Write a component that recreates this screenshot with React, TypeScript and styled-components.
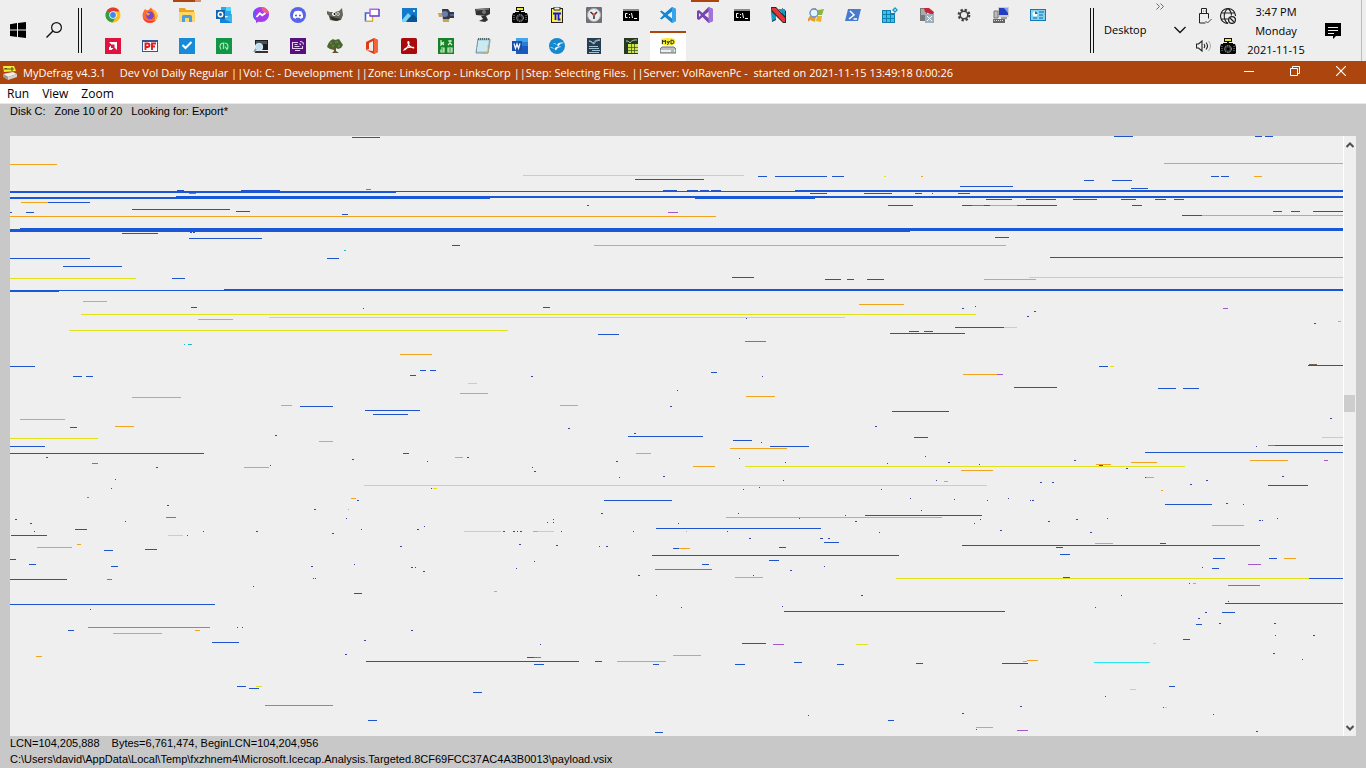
import React from "react";
import styled, { createGlobalStyle } from "styled-components";

const ACCENT = "#ad460e";
const UI_FONT = '"Open Sans", "Noto Sans", sans-serif';
const PLAIN_FONT = '"Liberation Sans", Arial, sans-serif';

const GlobalStyle = createGlobalStyle`
  * { box-sizing: border-box; }
  body { margin: 0; background: #c8c8c8; color: #000; font-family: ${UI_FONT}; font-size: 11px; }
  button { border: 0; padding: 0; background: none; font: inherit; color: inherit; cursor: pointer; }
  svg { display: block; }
`;

const Screen = styled.div`
  display: flex;
  flex-direction: column;
  min-height: 100vh;
`;

/* ---------- taskbar ---------- */

const Taskbar = styled.header`
  display: flex;
  height: 61px;
  background: #eee;
  overflow: hidden;
`;

const StartArea = styled.div`
  display: flex;
  align-items: center;
  flex: none;
  width: 95px;
  padding: 0 0 1px 10px;
  gap: 16px;
`;

const StartButton = styled.button`
  width: 20px;
`;

const Separator = styled.div`
  flex: none;
  width: 4px;
  height: 45px;
  border: solid #111;
  border-width: 0 1px;
`;

const AppRows = styled.nav`
  flex: 1;
  min-width: 0;
`;

const AppRow = styled.div`
  display: flex;
  height: 31px;
`;

const AppButton = styled.button<{ $active?: boolean; $running?: "one" | "many" }>`
  position: relative;
  flex: none;
  width: 36px;
  margin-right: 1px;
  padding: 7px 10px 8px;
  background: ${(p) => (p.$active ? "#fff" : "none")};
  &::before {
    content: "";
    display: ${(p) => (p.$active || p.$running ? "block" : "none")};
    position: absolute;
    top: 0;
    left: ${(p) => (p.$active ? 0 : 4)}px;
    right: ${(p) => (p.$active ? 0 : 4)}px;
    height: 2px;
    background: ${(p) =>
      p.$running === "many" ? `linear-gradient(90deg, ${ACCENT} 22px, #cf9474 22px)` : ACCENT};
  }
`;

const Tray = styled.div`
  display: flex;
  align-items: center;
  flex: none;
  width: 276px;
`;

const DesktopMenu = styled.button`
  position: relative;
  display: flex;
  align-items: center;
  justify-content: space-between;
  width: 102px;
  height: 61px;
  padding: 0 10px 2px;
`;

const Overflow = styled.span`
  position: absolute;
  top: 3px;
  right: 32px;
`;

const TrayGrid = styled.div`
  display: grid;
  grid-template-columns: 16px 16px;
  grid-auto-rows: 16px;
  gap: 14px 8px;
`;

const Clock = styled.time`
  width: 80px;
  text-align: center;
  line-height: 19px;
  white-space: nowrap;
`;

const Notifications = styled.button`
  width: 46px;
  height: 61px;
  padding: 0 9px;
  border-right: 1px solid #bbb;
`;

/* ---------- window ---------- */

const TitleBar = styled.div`
  display: flex;
  align-items: center;
  height: 23px;
  padding-left: 2px;
  background: ${ACCENT};
  color: #fff;
  white-space: nowrap;
`;

const Title = styled.h1`
  display: flex;
  flex: 1;
  gap: 14px;
  min-width: 0;
  margin: 0 0 0 5px;
  overflow: hidden;
  font-size: 11px;
  font-weight: 400;
  line-height: 23px;
`;

const WindowButton = styled.button`
  display: flex;
  align-items: center;
  justify-content: center;
  width: 46px;
  height: 23px;
  padding-bottom: 3px;
  &:last-child { margin-right: 2px; }
`;

const MenuBar = styled.nav`
  display: flex;
  gap: 13px;
  height: 20px;
  padding: 0 7px;
  background: #fff;
  border-bottom: 1px solid #e8e8e8;
  font-size: 12px;
  line-height: 19px;
`;

const InfoLine = styled.div`
  display: flex;
  gap: 9px;
  height: 32px;
  padding-left: 10px;
  font: 11px/15px ${PLAIN_FONT};
  white-space: nowrap;
`;

const MapFrame = styled.main`
  display: flex;
  flex: 1 1 600px;
  margin: 0 10px;
  background: #efefef;
`;

const MapSvg = styled.svg`
  flex: 1;
  min-width: 0;
  height: auto;
`;

const ScrollBar = styled.div`
  display: flex;
  flex-direction: column;
  width: 13px;
  border-left: 1px solid #fff;
`;

const ScrollButton = styled.button`
  display: flex;
  justify-content: center;
  align-items: center;
  height: 17px;
`;

const ScrollTrack = styled.div`
  display: flex;
  flex-direction: column;
  flex: 1;
`;

const ScrollGap = styled.div<{ $share: number }>`
  flex: ${(p) => p.$share};
`;

const ScrollThumb = styled.div`
  height: 17px;
  margin-right: 1px;
  background: #cdcdcd;
`;

const StatusBar = styled.footer`
  height: 32px;
  padding-left: 10px;
  font: 11px/16px ${PLAIN_FONT};
  white-space: nowrap;
`;

const StatusLine = styled.div`
  display: flex;
  height: 16px;
  gap: 12px;
  line-height: 14px;
`;

/* ---------- disk map data: "row:start-end,start-end ..." in cluster-map units ---------- */

const runs: { color: string; rows: string }[] = [
  {
    color: "#e2e21c",
    rows: `175:523-744 176:884-886 278:10-136 277:1029-1343 314:81-976 317:269-845 330:69-508
    327:1004-1017 438:10-98 485:364-987 488:433-437 535:168-183 383:468-477 466:745-1185
    531:464-501,538-554 366:1110-1114 437:1322-1343 686:256-262 578:896-1309
    644:856-868 643:1153-1156 689:1130-1136 707:1165-1167`,
  },
  {
    color: "#f2a41c",
    rows: `164:10-57 202:21-48 216:10-716 319:198-233 354:400-432 304:859-904 163:1164-1343
    176:921-923,1254-1262 205:990-1017 215:1202-1343 279:984-1036 321:1338-1341
    397:132-181 419:20-65 426:115-134 405:281-292,560-578 457:455-463 467:244-269 498:351-356
    509:348-349 547:37-72 544:77-81 393:460-488 396:746-775 448:730-787 453:636-651 466:693-715
    531:533-538 548:679-690 374:963-997 460:1250-1288 464:1096-1111 462:1131-1157 470:961-993
    477:1146-1154 481:944-948 490:1161-1163 525:1212-1244 543:1095-1113 633:113-162 630:195-200
    656:36-42 591:494-497 661:617-666,1023-1027 655:673-701 558:1284-1296 583:1193-1196
    660:1027-1038 727:976-993`,
  },
  {
    color: "#26e6ee",
    rows: `245:594-1006 301:83-107 441:319-333 517:726-942 531:686-687 577:735-763 662:1094-1150`,
  },
  { color: "#14bccd", rows: `627:88-210 705:265-333 344:184-185,188-192 250:344-346` },
  {
    color: "#a457cc",
    rows: `189:366-371 212:668-678 341:745-766 205:972-984 308:1223-1228 463:92-98 497:87-89
    517:166-176 374:997-1003 445:1268-1275 460:1324-1328 579:107-112 657:534-541 569:655-712
    564:1248-1261 585:1228-1260 644:773-784 730:1017-1028`,
  },
  {
    color: "#1e53cb",
    rows: `137:352-380 190:177-184,241-280,663-677,687-698,700-709,711-721 202:48-90 212:10-12,26-34
    209:132-230 211:236-250 214:342-348 233:122-158 232:190-192,193-195 238:189-262 245:452-460
    258:327-339,10-90 266:63-122 278:172-185 307:191-197,543-550 308:363-364 179:635-704
    176:758-767,775-827,832-844 193:810-827,864-892 205:587-589,888-913 277:732-754
    279:825-841,847-854,867-884 334:598-619 333:890-965 331:909-919,924-933
    136:1114-1133,1255-1262,1265-1273 176:1211-1219,1221-1229 180:1084-1094,1112-1132
    186:960-1013 188:1131-1148 193:915-922,932-933,958-970
    199:986-1012,1026-1056,1073-1097,1121-1136,1155-1166,1174-1184
    205:962-972,984-990,1017-1057,1132-1142 211:1273-1282,1291-1300,1313-1343 215:1182-1202
    237:995-1009 257:1050-1343 327:955-1004 366:10-35 376:73-82,86-93 375:410-416
    370:420-426,430-436 406:300-333 410:365-420 414:373-408 427:70-77 446:10-45 453:10-204
    453:403-409 529:75-87 535:11-47 549:145-157 372:711-717 411:892-949 436:628-703 440:733-752
    446:770-809 500:604-672 515:865-982 528:656-821 542:824-839 547:779-786 548:673-679
    366:1099-1108 365:1308-1343 387:1014-1057 388:1158-1176,1183-1199 437:914-928 445:1275-1343
    452:1145-1343 485:1268-1308 504:1165-1212 543:1160-1166 545:962-1260 547:1056-1063
    550:104-113 559:10-16 564:29-36 566:111-118 579:10-67 604:10-215 630:68-74 642:212-239
    593:354-362 661:366-579 657:527-534 664:534-544 661:595-602 664:653-659 686:237-246
    688:249-259 692:473-482 720:368-377 732:655-663 555:652-899 554:1060-1070 564:702-709
    560:769-779 578:1309-1343 577:1063-1070 558:1213-1225,1269-1277 568:1212-1219 603:1225-1343
    611:784-1005 612:1222-1235 624:1196-1202 639:1183-1190 643:742-766 664:735-745 662:794-802
    664:837-844 663:916-923,1002-1028 686:1169-1175 720:888-894`,
  },
  {
    color: "#3a44a4",
    rows: `318:746-747 308:962-964 306:975-976 311:1034-1036 316:1027-1029 323:1314-1316
    435:275-277 459:352-354 461:427-428 457:46-48 467:156-158 465:270-271 479:115-116 488:111-112
    505:167-169 488:431-432 500:357-359 518:346-347 509:314-316 519:15-17 523:30-32 531:34-35
    521:125-126 535:187-188 531:203-204 531:256-258 533:332-334 529:361-362 529:417-419
    526:424-425 546:400-402 376:531-533,762-763 390:677-678 406:670-672 428:568-570 426:875-877
    433:634-636 442:761-762 457:467-469 461:616-618 467:532-533 471:534-536 458:739-740
    462:785-786 463:887-888 477:619-620 476:663-665 480:783-784 487:759-760 489:743-744,881-882
    513:601-603,738-739 515:845-846 518:799-800 521:855-857 519:553-554
    522:547-548,553-554 523:678-679 531:503-505,513-515,517-518,520-522,561-562,633-634,727-728
    532:879-880 538:749-751,820-823,828-830 544:519-521 545:556-558 546:599-600,606-608
    418:1330-1332 446:1256-1257 456:925-926 462:948-950 464:979-980 460:1074-1076 465:1099-1103
    468:1126-1128 477:1145-1146 476:1282-1284 480:936-937 482:1040-1042,1052-1054 484:1190-1192
    480:1206-1208 498:910-911 499:954-955 500:987-988 498:1008-1009 500:1030-1031,1032-1034
    510:921-922 503:1226-1228 504:1243-1244 519:980-981 523:974-975 521:1048-1050 519:1076-1078
    518:1107-1108 520:1259-1261,1262-1263 518:1277-1278 530:1000-1002 532:1090-1092
    609:90-91 627:237-238,242-243 566:311-313 578:313-314,315-316 564:354-355 586:253-254
    567:411-413,415-416 571:423-425 568:516-517 561:534-535 575:638-640 595:656-657 607:681-682
    630:411-413 640:364-366 654:345-347 644:540-541 566:824-825 570:790-792 575:753-754
    567:1202-1203 583:1189-1190 601:1228-1229 595:861-863,1121-1122 607:1095-1096 606:782-783
    612:1205-1207 618:1198-1200 623:1219-1221,1274-1276 635:1275-1276,1313-1315 653:1273-1275
    659:1302-1303 696:1105-1106 707:1163-1164 706:1020-1022 713:962-964 714:1213-1214
    715:808-809 729:976-977 731:1256-1258`,
  },
  { color: "#77604f", rows: `364:1309-1317` },
];

/* Multi-row extents: x, y, width, height */
const bands = [
  [10, 191, 1333, 1], [10, 192, 386, 1], [795, 190, 548, 1],
  [10, 197, 480, 2], [176, 196, 1167, 2], [695, 198, 120, 1],
  [10, 229, 900, 3], [20, 228, 1323, 3],
  [10, 290, 1333, 1], [10, 291, 49, 1], [224, 289, 1119, 1],
];

const toPath = (rows: string) =>
  rows
    .trim()
    .split(/\s+/)
    .map((row) => {
      const [y, list] = row.split(":");
      return list
        .split(",")
        .map((span) => {
          const [a, b] = span.split("-").map(Number);
          return `M${a} ${y}h${b - a}v1h${a - b}z`;
        })
        .join("");
    })
    .join("");

const DiskMap = () => (
  <MapSvg viewBox="10 136 1333 600" preserveAspectRatio="none" shapeRendering="crispEdges" role="img" aria-label="Disk map">
    {runs.map((r) => (
      <path key={r.color} d={toPath(r.rows)} fill={r.color} />
    ))}
    {bands.map(([x, y, w, h]) => (
      <rect key={`${x}-${y}`} x={x} y={y} width={w} height={h} fill="#1a57d6" />
    ))}
    <path d="M189 193h7v1h-7z" fill="#3f9b62" />
  </MapSvg>
);

/* ---------- icons ---------- */

const Icon = ({ children, w = 16, h = 16 }: { children: React.ReactNode; w?: number; h?: number }) => (
  <svg width={w} height={h} viewBox={`0 0 ${w} ${h}`} aria-hidden="true">{children}</svg>
);

const Camera = () => (
  <Icon>
    <path d="M4 0h8v4H9v2H7V4H4z" fill="#111" /><path d="M5 1h6v2H5z" fill="#f4ec2a" />
    <path d="M3 5h10v1h2l1 3v6l-1 1H1l-1-1V9l1-3h2z" fill="#070707" />
    <circle cx="8" cy="11" r="3.4" fill="#333" stroke="#bbb" strokeDasharray="1.4 1" />
    <circle cx="8" cy="11" r="1.5" fill="#000" /><path d="M2 8v5M14 8v5" stroke="#999" strokeDasharray="1 1" />
  </Icon>
);

const Cmd = () => (
  <Icon>
    <path d="M0 2h16v12H0z" fill="#8b8b8b" /><path d="M0 4h16v10H0z" fill="#000" />
    <path d="M4.500 6.500H2.500v4h2M6.500 7v1M6.500 10v1M8.500 6l1 5M11 11.500h3" stroke="#fff" fill="none" />
  </Icon>
);

type App = { name: string; icon: React.ReactNode; running?: "one" | "many"; active?: boolean };

const topApps: App[] = [
  { name: "Chrome", icon: <Icon><circle cx="8" cy="8" r="7.500" fill="#fbc116" /><path d="M8 8 1.500 4.200A7.500 7.500 0 0 1 14.600 4.500H8z" fill="#e33b2e" /><path d="M8 8 1.500 4.200A7.500 7.500 0 0 0 7.500 15.500L11 10z" fill="#2c9f4b" /><circle cx="8" cy="8" r="3.700" fill="#fff" /><circle cx="8" cy="8" r="2.900" fill="#4285f4" /></Icon> },
  { name: "Firefox", icon: <Icon><path d="M3 2l2 1.500C7 3 7.500 2 9 .5c1 2 6.500 3.500 6.500 8A7.500 7.500 0 0 1 .5 9C.5 6 1.500 4.500 3 2z" fill="#ff6a2b" /><path d="M9 .5c2 3 6.500 3.500 6.500 8a7.500 7.500 0 0 1-3 5.500C15 8 11 5 9 .5z" fill="#ffc62e" /><path d="M1 11c2 5 9 6 12.500 2.500-3 1-9 1-12.500-2.500z" fill="#ef3264" /><circle cx="8" cy="8.500" r="3.700" fill="#7846c6" /><path d="M3.500 5.500c2-.5 3 1 5 1-.5 1.500-2 1-2.500 2.500z" fill="#ffa02e" /></Icon> },
  { name: "File Explorer", running: "many", icon: <Icon><path d="M0 1h6l1 2h8v12H0z" fill="#e9a51f" /><path d="M0 5h16v10H0z" fill="#ffd767" /><path d="M3 15V9.500Q3 8 4.500 8h7Q13 8 13 9.500V15h-3v-4H6v4z" fill="#4a9fe0" /></Icon> },
  { name: "Outlook", icon: <Icon><path d="M5 0h10v9H5z" fill="#28a8ea" /><path d="M10 0h5v4h-5z" fill="#50d9ff" /><path d="M4 8l6 3 6-4v9H4z" fill="#1483d8" /><path d="M16 7v9L8 12z" fill="#35b8f1" /><path d="M0 3h9v9H0z" fill="#0f65b5" /><circle cx="4.500" cy="7.500" r="2.200" fill="none" stroke="#fff" strokeWidth="1.500" /></Icon> },
  { name: "Messenger", icon: <Icon><path d="M8 0c4.600 0 8 3.300 8 7.500S12.600 15 8 15l-2.500-.3L3 16v-2.500C1 12 0 10 0 7.500 0 3.300 3.400 0 8 0z" fill="#a13df0" /><path d="M3 13.500C1 12 0 10 0 7.500 0 5 1 3 3 1.700V16z" fill="#5d5cf3" /><path d="M8 0c4.600 0 8 3.300 8 7l-6-2z" fill="#f45b83" /><path d="M3.500 10l3.300-3.700 2.400 2L12.500 6" stroke="#fff" strokeWidth="1.800" fill="none" /></Icon> },
  { name: "Discord", icon: <Icon><circle cx="8" cy="8" r="8" fill="#5865e8" /><path d="M4.500 4.500c2-1 5-1 7 0 1.300 2 1.700 4 1.500 6-1 .8-2 1.200-2.700 1.300l-.6-1H6.300l-.6 1c-1-.2-2-.6-2.700-1.300-.2-2 .3-4 1.500-6z" fill="#fff" /><circle cx="6" cy="8.500" r="1.100" fill="#5865e8" /><circle cx="10" cy="8.500" r="1.100" fill="#5865e8" /></Icon> },
  { name: "GIMP", icon: <Icon><path d="M0 4l3 1 5 0 4-1 3-3 1 7-2 5-5 1-6-1-1-4-2-2z" fill="#67645a" /><path d="M2 9l3 4 5 1 4-2-5-1z" fill="#302f2b" /><circle cx="7" cy="7" r="2" fill="#fff" /><circle cx="11" cy="7" r="1.700" fill="#fff" /><circle cx="7.500" cy="7" r=".9" /><circle cx="11" cy="7" r=".8" /></Icon> },
  { name: "Your Phone", icon: <Icon><path d="M1 6h5V2h9v6H9v6H1z" fill="#fff" /><path d="M6 6H1.500v8.500" fill="none" stroke="#3b65df" strokeWidth="1.600" /><path d="M1 14.200h7.500V9" fill="none" stroke="#d3b12c" strokeWidth="1.400" /><path d="M6 9V2.200h9" fill="none" stroke="#b765ea" strokeWidth="1.600" /><path d="M15 2v7H5.500" fill="none" stroke="#653bc9" strokeWidth="1.500" /></Icon> },
  { name: "Photos", icon: <Icon><path d="M1 1h15v14H1z" fill="#1579cb" /><path d="M1 13l6-7 9 9H1z" fill="#79d4f6" /><path d="M7 12l5-5 4 4v4H5z" fill="#095494" /><circle cx="13" cy="4" r="1" fill="#fff" /></Icon> },
  { name: "Camera Capture", icon: <Icon><path d="M4 2h6l2 3h4v6h-4l-2 3H5z" fill="#343944" /><circle cx="7" cy="7" r="3" fill="#6e7eaa" /><path d="M0 6h4v4H1zM5 12h6v3H5z" fill="#c7a352" /><path d="M12 7h4v2h-4z" fill="#4764a4" /></Icon> },
  { name: "Webcam", icon: <Icon><path d="M0 2l15-1v6l-4 2-10-1z" fill="#333" /><path d="M1 3l13-1" stroke="#888" /><circle cx="9" cy="5" r="2" fill="#777" /><path d="M6 9h5l2 4-3 2-6-1 4-2z" fill="#303030" /></Icon> },
  { name: "Screenshot", icon: <Camera /> },
  { name: "Pi", icon: <Icon><path d="M2 1h12v15H2z" fill="#222" /><path d="M3 2h10v13H3z" fill="#f8ef34" /><path d="M5 0h6v3H5z" fill="#eee" stroke="#333" /><path d="M4 5h8v9H4z" fill="#fff36b" /><path d="M4 6.500h8M6.500 7v6M9.500 7v5.500h2" stroke="#1717d0" strokeWidth="1.800" fill="none" /></Icon> },
  { name: "Clock", icon: <Icon><rect width="16" height="16" rx="1" fill="#6d7176" /><circle cx="8" cy="8" r="6.500" fill="#e9ecee" stroke="#aaa" /><path d="M4.500 5L8 8l3-3M8 8v4" stroke="#3b3535" strokeWidth="1.600" fill="none" /><circle cx="8" cy="8" r="1.300" fill="#e3452e" /></Icon> },
  { name: "Command Prompt", icon: <Cmd /> },
  { name: "VS Code", icon: <Icon><path d="M12 0l4 2v12l-4 2-7-6-3.500 2.500L0 11.500 3.500 8 0 4.500l1.500-1L5 6zM12 4.500L7.500 8l4.500 3.500z" fill="#1785cf" fillRule="evenodd" /><path d="M12 0l4 2v12l-4 2z" fill="#36a5ec" /></Icon> },
  { name: "Visual Studio", running: "one", icon: <Icon><path d="M11.500 0L16 2v12l-4.500 2-6-6L2 13l-2-1V4l2-1 3.500 3zM2 6v4l2-2zM12 4.500L7.500 8l4.500 3.500z" fill="#7645b2" fillRule="evenodd" /><path d="M11.500 0L16 2v12l-4.500 2z" fill="#a174da" /></Icon> },
  { name: "Command Prompt 2", icon: <Cmd /> },
  { name: "Netbeans", icon: <Icon><path d="M0 0h5l6 6V1l4 3v12h-3L5 9v4l-4 2z" fill="#222c34" /><path d="M1 1h4l9 10v4h-2L1 3z" fill="#e63532" /><path d="M1 5l4 4v3l-4 2zM7 2h7v7z" fill="#159bc0" /></Icon> },
  { name: "Windows Search", icon: <Icon><path d="M10 3l6-1-2 6H9z" fill="#8cb63a" /><path d="M3 9h5l-1 6-5-2z" fill="#e0a13a" /><path d="M9 9h5l-1 6-5-1z" fill="#e6b52c" /><path d="M3 2l5-1v3H3z" fill="#e77f32" /><circle cx="6" cy="6" r="4" fill="#e2f5ff" stroke="#6c8ec4" strokeWidth="1.400" /><path d="M3 9l-3 5" stroke="#d89736" strokeWidth="2" /></Icon> },
  { name: "PowerShell", icon: <Icon><path d="M3 2h13l-3 12H0z" fill="#477bd0" /><path d="M5 4l4 4-5 4M8.500 12H12" stroke="#fff" strokeWidth="1.500" fill="none" /></Icon> },
  { name: "Registry Editor", icon: <Icon><path d="M0 3h9v3h4v10H0z" fill="#107fac" /><path d="M1 4h3v3H1zM5 4h3v3H5zM1 8h3v3H1zM5 8h3v3H5zM9 8h3v3H9zM1 12h3v3H1zM5 12h3v3H5zM9 12h3v3H9z" fill="#35c3ef" /><path d="M13 0l3 3-3 3-3-3z" fill="#169bd0" /><path d="M13 2l1 1-1 1-1-1z" fill="#fff" /></Icon> },
  { name: "Process Tool", icon: <Icon><path d="M1 1h7v13H1z" fill="#77787a" /><path d="M2 3h5M2 5h5M2 7h5" stroke="#ddd" /><path d="M5 1h5l5 4-1 3-8-3z" fill="#c52738" /><path d="M6 7h9v9H6z" fill="#9fb0bd" /><path d="M8 9l5 5M13 9l-5 5" stroke="#fff" /></Icon> },
  { name: "Settings", icon: <Icon><circle cx="8" cy="8" r="5.300" fill="none" stroke="#414141" strokeWidth="2.200" strokeDasharray="2.300 1.860" /><circle cx="8" cy="8" r="3.800" fill="none" stroke="#414141" strokeWidth="1.500" /></Icon> },
  { name: "Remote Desktop", icon: <Icon><path d="M5 0h11v10H5z" fill="#c9ced2" /><path d="M6 1h9v7H6z" fill="#243bc4" /><path d="M11 1h4v5z" fill="#819cf7" /><path d="M1 4h4v7H1z" fill="#bbb" stroke="#777" /><path d="M0 12h12v4H0z" fill="#666" /><path d="M1 13.500h10" stroke="#ddd" strokeDasharray="1 1" /><path d="M8 10h6v2H8z" fill="#a0a0a0" /></Icon> },
  { name: "Control Panel", icon: <Icon><path d="M0 2h16v12H0z" fill="#1478b4" /><path d="M1 3h14v10H1z" fill="#82d3f3" /><circle cx="5" cy="7" r="2.500" fill="#fff" /><path d="M5 7V4.500A2.500 2.500 0 0 1 7.500 7z" fill="#166ca8" /><path d="M9 5h5M9 8h4M3 11h4M9 11h4" stroke="#176599" /></Icon> },
];

const bottomApps: App[] = [
  { name: "AMD Radeon", icon: <Icon><path d="M0 0h16v16H0z" fill="#df1240" /><path d="M4 4h8v8L9.500 9.500v-3h-3zM6 7.500v2.500h2.500L6.500 12H4V9.500z" fill="#fff" /></Icon> },
  { name: "Process File", icon: <Icon><path d="M0 2h16v12H0z" fill="#315794" /><path d="M1 4h14v9H1z" fill="#fff" /><path d="M3.500 12V5.500h2q2 0 2 1.700T5.500 9h-2M10 12V5.500h4M10 8.500h3" stroke="#e01b20" strokeWidth="1.900" fill="none" /></Icon> },
  { name: "Tasks", icon: <Icon><path d="M0 0h16v16H0z" fill="#188bd8" /><path d="M3.500 7l3 3 6-6" stroke="#fff" strokeWidth="2" fill="none" /></Icon> },
  { name: "Fences", icon: <Icon><path d="M0 0h16v16H0z" fill="#109746" /><path d="M5 11.500C3 8 4 5 7.500 5v6M8.500 5C12.500 5 12.500 9 11 11.500L9 8.500" stroke="#a9e5b7" strokeWidth="1.200" fill="none" /></Icon> },
  { name: "Magnifier", icon: <Icon><path d="M2 2h13v10H2z" fill="#1c1d20" /><path d="M3 3h11v3H3z" fill="#46525c" /><path d="M2 13h13v2H2z" fill="#333" /><circle cx="6" cy="9" r="3.500" fill="#b7e0f6" stroke="#dde5e8" strokeWidth="1.200" /><path d="M3 11l-2 3" stroke="#8ba3ad" strokeWidth="2" /></Icon> },
  { name: "Remote Screen", icon: <Icon><path d="M0 0h16v16H0z" fill="#571080" /><path d="M8 4.500H2.500v6h10V8M5 12.500h5M4.500 6.500h3M4.500 8.500h5M9.500 5.500l1.500 1.500M10 3.500q3.500 0 3.500 3" stroke="#e7c9f4" strokeWidth="1.100" fill="none" /></Icon> },
  { name: "Tree View", icon: <Icon><path d="M3 3l3-2 2 1 4-1 2 3 2 3-2 3-3 1-2-1-2 2-4-1-3-2 1-3z" fill="#48672f" /><path d="M7 8h2v5l3 2H5l2-2z" fill="#68512e" /><path d="M3 5h2M8 4h3M5 8h2M11 8h2" stroke="#799650" /></Icon> },
  { name: "Office", icon: <Icon><path d="M2 4l8-4 4 2v12l-4 2-8-4 7 1V3L5 5v6l-3 1z" fill="#df3b17" /><path d="M10 0l4 2v12l-4 2z" fill="#f26739" /></Icon> },
  { name: "Acrobat", icon: <Icon><rect width="16" height="16" rx="1.500" fill="#a90b0c" /><path d="M3 12c4-1 6-8 4.500-8.500C6 3 7 9 12.500 10c2-1-7-2-9.500 2z" stroke="#fff" strokeWidth="1.100" fill="none" /></Icon> },
  { name: "Character Grid", icon: <Icon><path d="M0 0h16v16H0z" fill="#168126" /><path d="M3 2v5l3-3M3 4l3 3M10 3h4M12 2v3l-2 2M12 5l2 2M3 10h3v4H3v-2h3M10 10h4v4h-4zM10 12h4" stroke="#d3f4d0" strokeWidth="1.200" fill="none" /></Icon> },
  { name: "Notepad", icon: <Icon><path d="M3 1h12l-2 14H1z" fill="#add8e4" stroke="#78909a" /><path d="M3 4h10M3 6h10M3 8h9M2 10h10M2 12h10" stroke="#e9fbff" /><path d="M3 1h12" stroke="#59656c" strokeWidth="2" strokeDasharray="1 1" /><path d="M15 3l-2 12H7" stroke="#c2a675" fill="none" /></Icon> },
  { name: "Word", icon: <Icon><path d="M4 0h12v16H4z" fill="#185abd" /><path d="M4 0h12v4H4z" fill="#41a5ee" /><path d="M4 4h12v4H4z" fill="#2b7cd3" /><path d="M0 3h10v10H0z" fill="#174faa" /><path d="M2 5.500l1.500 5L5 6l1.500 4.500L8 5.500" stroke="#fff" strokeWidth="1.200" fill="none" /></Icon> },
  { name: "OpenOffice", icon: <Icon><circle cx="8" cy="8" r="8" fill="#1688cf" /><path d="M4 6c2-1 3 0 4 1 1.500-2.500 4-3 7-2-3 0-4.500 1-5.500 3.500-1.500-2-3-2.500-5.500-2.500zM1 10c2-1 3.500 0 4.500 1 1.500-2.500 4-3 7-2-3 0-4.500 1-5.500 3.500-1.500-2-3.500-2.500-6-2.500z" fill="#fff" /></Icon> },
  { name: "Writer", icon: <Icon><path d="M1 0h14v16H1z" fill="#263e50" /><path d="M3 3c3 0 3 1 4 2 2-3 4-3 7-3-3 1-5 1-6 4-2-1-2-2-5-3zM3 8.500h9M3 10.500h10M6 12.500h8M3 14.500h10" stroke="#a2c2d5" fill="none" /></Icon> },
  { name: "Calc", icon: <Icon><path d="M1 0h14v16H1z" fill="#253823" /><path d="M3 3c3 0 3 1 4 2 2-3 4-3 7-3" stroke="#bdd4b1" fill="none" /><path d="M5 6h10v9H5z" fill="#cde546" /><path d="M5 9.500h10M5 12.500h10M8.500 6v9M11.500 6v9" stroke="#394c20" strokeWidth=".7" /></Icon> },
  { name: "MyDefrag", active: true, icon: <Icon><path d="M1 1q7-2 14 0v5q-7 3-14 0z" fill="#f6ed2d" /><path d="M2.500 6V2l1.500 2 1.500-2v4M7 3l1 2 1.500-2L7.500 7M11 2v4q3 0 3-2t-3-2" stroke="#393a16" fill="none" /><path d="M2 9h12l2 2v4H0v-4z" fill="#bebebe" stroke="#6f7376" /><path d="M1 12h14v2H1z" fill="#eee" /><path d="M11 13h3" stroke="#38a149" /></Icon> },
];

const AppStrip = ({ apps }: { apps: App[] }) => (
  <AppRow>
    {apps.map((app) => (
      <AppButton key={app.name} type="button" aria-label={app.name} $running={app.running} $active={app.active}>
        {app.icon}
      </AppButton>
    ))}
  </AppRow>
);

export default function App() {
  return (
    <>
      <GlobalStyle />
      <Screen>
        <Taskbar>
          <StartArea>
            <StartButton type="button" aria-label="Start">
              <Icon><path d="M0 2.200L7 1v6.500H0zM8 .9L16 0v7.500H8zM0 8.500h7V15l-7-1zM8 8.500h8V16l-8-1.100z" /></Icon>
            </StartButton>
            <button type="button" aria-label="Search">
              <Icon><circle cx="10.500" cy="5.500" r="4.900" fill="none" stroke="#111" strokeWidth="1.200" /><path d="M7 9L.5 15.500" stroke="#111" strokeWidth="1.400" /></Icon>
            </button>
            <Separator />
          </StartArea>
          <AppRows aria-label="Taskbar">
            <AppStrip apps={topApps} />
            <AppStrip apps={bottomApps} />
          </AppRows>
          <Tray>
            <Separator />
            <DesktopMenu type="button">
              Desktop
              <Icon w={12} h={8}><path d="M.5 1L6 6.500 11.500 1" fill="none" stroke="#111" strokeWidth="1.300" /></Icon>
              <Overflow>
                <Icon w={8} h={7}><path d="M.5.500l3 3-3 3M4.500.500l3 3-3 3" fill="none" stroke="#62659c" /></Icon>
              </Overflow>
            </DesktopMenu>
            <TrayGrid>
              <Icon><path d="M5.500 5V.500h5V5M3.500 5.500h9v5M3.500 5.500V15h6M7 3h.5M9 3h.5" fill="none" stroke="#222" /><path d="M9.500 13l2 2 4-4" fill="none" stroke="#444" /></Icon>
              <Icon><path d="M8 15.500A7.500 7.500 0 1 1 15.500 8M8 .5C3 4 3 12 8 15.500M8 .5c2.500 2 3.500 4 3.500 7M1 5h14M1 11h7" fill="none" stroke="#222" strokeWidth="1.100" /><circle cx="12" cy="12" r="3.400" fill="#eee" stroke="#222" strokeWidth="1.300" /><path d="M10 10l4 4" stroke="#222" strokeWidth="1.300" /></Icon>
              <Icon><path d="M.5 6h2L6 3v10L2.500 10h-2zM8 6q1.500 2 0 4M10 4.500q3 3.500 0 7" fill="none" stroke="#222" strokeWidth="1.100" /><path d="M12.500 3q4 5 0 10" fill="none" stroke="#aaa" /></Icon>
              <Camera />
            </TrayGrid>
            <Clock dateTime="2021-11-15T15:47">
              3:47 PM<br />Monday<br />2021-11-15
            </Clock>
            <Notifications type="button" aria-label="Notifications">
              <Icon><path d="M0 0h16v13h-5l-3 3v-3H0z" /><path d="M3 4.500h10M3 7.500h10M3 10.500h6" stroke="#eee" /></Icon>
            </Notifications>
          </Tray>
        </Taskbar>

        <TitleBar>
          <Icon><path d="M1 1h11l2 5-12 1z" fill="#f5ec3c" /><path d="M3 5V3l1 1 1-1v2M7 3v2M9 5V3h2v2z" stroke="#55501c" fill="none" /><path d="M1 9l10-2 4 2-9 3z" fill="#f2eee4" /><path d="M1 9l5 3v3l-5-3z" fill="#9a9d9c" /><path d="M6 12l9-3v3l-9 3z" fill="#cfd2d0" /></Icon>
          <Title>
            <span>MyDefrag v4.3.1</span>
            <span>Dev Vol Daily Regular ||Vol: C: - Development ||Zone: LinksCorp - LinksCorp ||Step: Selecting Files. ||Server: VolRavenPc -&nbsp; started on 2021-11-15 13:49:18 0:00:26</span>
          </Title>
          <WindowButton type="button" aria-label="Minimize">
            <Icon w={10} h={10}><path d="M0 5.500h10" stroke="#fff" /></Icon>
          </WindowButton>
          <WindowButton type="button" aria-label="Restore">
            <Icon w={10} h={10}><path d="M.5 2.500h7v7h-7zM2.500 2.500v-2h7v7h-2" fill="none" stroke="#fff" /></Icon>
          </WindowButton>
          <WindowButton type="button" aria-label="Close">
            <Icon w={10} h={10}><path d="M0 0l10 10M10 0L0 10" stroke="#fff" strokeWidth="1.200" /></Icon>
          </WindowButton>
        </TitleBar>

        <MenuBar>
          <button type="button">Run</button>
          <button type="button">View</button>
          <button type="button">Zoom</button>
        </MenuBar>

        <InfoLine>
          <span>Disk C:</span>
          <span>Zone 10 of 20</span>
          <span>Looking for: Export*</span>
        </InfoLine>

        <MapFrame>
          <DiskMap />
          <ScrollBar>
            <ScrollButton type="button" aria-label="Scroll up">
              <Icon w={8} h={6}><path d="M.5 5L4 1.500 7.500 5" fill="none" stroke="#505050" strokeWidth="2" /></Icon>
            </ScrollButton>
            <ScrollTrack>
              <ScrollGap $share={242} />
              <ScrollThumb />
              <ScrollGap $share={307} />
            </ScrollTrack>
            <ScrollButton type="button" aria-label="Scroll down">
              <Icon w={8} h={6}><path d="M.5 1L4 4.500 7.500 1" fill="none" stroke="#505050" strokeWidth="2" /></Icon>
            </ScrollButton>
          </ScrollBar>
        </MapFrame>

        <StatusBar>
          <StatusLine>
            <span>LCN=104,205,888</span>
            <span>Bytes=6,761,474, BeginLCN=104,204,956</span>
          </StatusLine>
          <StatusLine>C:\Users\david\AppData\Local\Temp\fxzhnem4\Microsoft.Icecap.Analysis.Targeted.8CF69FCC37AC4A3B0013\payload.vsix</StatusLine>
        </StatusBar>
      </Screen>
    </>
  );
}
